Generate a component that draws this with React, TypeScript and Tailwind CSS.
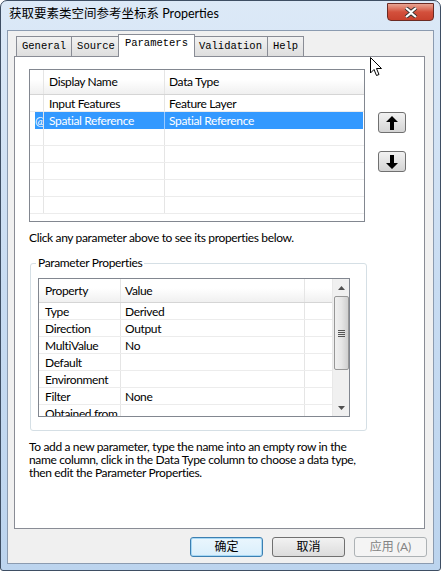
import React from 'react';

const ui = "font-['Lato','Noto_Sans_CJK_SC',sans-serif]";

const tabs = ['General', 'Source', 'Parameters', 'Validation', 'Help'];

const params = [
  { name: 'Input Features', type: 'Feature Layer', selected: false },
  { name: 'Spatial Reference', type: 'Spatial Reference', selected: true },
];

const props = [
  ['Type', 'Derived'],
  ['Direction', 'Output'],
  ['MultiValue', 'No'],
  ['Default', ''],
  ['Environment', ''],
  ['Filter', 'None'],
  ['Obtained from', ''],
];

const ArrowBtn = ({ down }: { down?: boolean }) => (
  <div className="w-[28px] h-[21px] rounded-[3px] border border-[#707070] bg-gradient-to-b from-[#f2f2f2] to-[#d4d4d4] flex items-center justify-center">
    <svg width="12" height="14" viewBox="0 0 12 14" className={down ? 'rotate-180' : ''}>
      <path d="M6 0 L12 6 L8 6 L8 14 L4 14 L4 6 L0 6 Z" fill="#000" />
    </svg>
  </div>
);

const DlgButton = ({ label, variant }: { label: string; variant: 'focus' | 'normal' | 'disabled' }) => {
  const base = 'w-[73px] h-[20px] rounded-[3px] flex items-center justify-center text-[12px]';
  const cls =
    variant === 'focus'
      ? 'border border-[#3c7fb1] bg-gradient-to-b from-[#eaf6fd] to-[#d9eefb] text-black shadow-[inset_0_0_0_1px_#a6d8f5]'
      : variant === 'normal'
      ? 'border border-[#707070] bg-gradient-to-b from-[#f2f2f2] to-[#dcdcdc] text-black'
      : 'border border-[#adb2b5] bg-[#f4f4f4] text-[#838383]';
  return <div className={`${base} ${cls}`}>{label}</div>;
};

export default function App() {
  return (
    <div className={`relative w-[441px] h-[571px] overflow-hidden rounded-t-[7px] rounded-b-[3px] border border-[#3e4e63] bg-gradient-to-b from-[#dce9f7] via-[#c8dcf2] to-[#bcd4ee] ${ui}`}>
      {/* title bar */}
      <div className="h-[29px] flex items-start justify-between pl-[8px] pr-[6px]">
        <div className="pt-[5px] text-[12.5px] leading-[16px] text-black">获取要素类空间参考坐标系 Properties</div>
        <div className="w-[47px] h-[18px] mt-[2px] rounded-b-[4px] border border-[#6b2a23] bg-gradient-to-b from-[#e8a493] via-[#d3503c] to-[#c8412d] flex items-center justify-center">
          <svg width="14" height="11" viewBox="0 0 14 11">
            <path d="M2 1 L7 5 L12 1 M2 10 L7 6 L12 10" stroke="#333" strokeWidth="4" fill="none" />
            <path d="M2 1 L7 5 L12 1 M2 10 L7 6 L12 10" stroke="#fff" strokeWidth="2.2" fill="none" />
          </svg>
        </div>
      </div>

      {/* client area */}
      <div className="mx-[6px] h-[534px] border border-[#8b9bb0] bg-[#f0f0f0] flex flex-col">
        {/* tabs */}
        <div className="flex items-end pl-[8px] pt-[3px] h-[25px]">
          {tabs.map((t) => {
            const sel = t === 'Parameters';
            return (
              <div
                key={t}
                className={`font-['Liberation_Mono',monospace] text-[10.5px] text-black border border-[#898c95] border-b-0 flex items-center ${
                  sel
                    ? 'h-[23px] -mx-[2px] px-[6px] bg-white z-10 -mb-px pb-[4px]'
                    : 'h-[20px] px-[5px] bg-gradient-to-b from-[#f2f2f2] to-[#dedede] -mr-px'
                }`}
              >
                {t}
              </div>
            );
          })}
        </div>

        {/* tab panel */}
        <div className="ml-[6px] w-[411px] h-[473px] border border-[#898c95] bg-white text-[12px] tracking-[-0.35px] text-black flex flex-col">
          {/* parameters list + arrows */}
          <div className="flex pl-[14px] pt-[12px]">
            <div className="w-[336px] h-[153px] border border-[#828790] overflow-hidden">
              <div className="flex h-[25px] border-b border-[#d5d5d5] bg-gradient-to-b from-white from-40% to-[#f0f0f0]">
                <div className="w-[14px] border-r border-[#e5e5e5]" />
                <div className="w-[121px] border-r border-[#e5e5e5] pl-[5px] flex items-center">Display Name</div>
                <div className="flex-1 pl-[4px] flex items-center">Data Type</div>
              </div>
              {params.map((p) => (
                <div key={p.name} className={`flex h-[17px] ${p.selected ? '' : 'border-b border-[#ececec]'}`}>
                  <div className="w-[14px] border-r border-[#e5e5e5] pl-[5px]">
                    {p.selected && (
                      <div className="h-full bg-[#3399ff] text-white leading-[17px] overflow-hidden">@</div>
                    )}
                  </div>
                  <div className={`w-[121px] border-r pl-[5px] leading-[17px] ${p.selected ? 'bg-[#3399ff] text-white border-[#9ccbff]' : 'border-[#e5e5e5]'}`}>
                    {p.name}
                  </div>
                  <div className={`flex-1 pl-[4px] leading-[17px] ${p.selected ? 'bg-[#3399ff] text-white mr-[1px]' : ''}`}>{p.type}</div>
                </div>
              ))}
              {[0, 1, 2, 3, 4].map((i) => (
                <div key={i} className="flex h-[17px] border-b border-[#ececec]">
                  <div className="w-[14px] border-r border-[#e5e5e5]" />
                  <div className="w-[121px] border-r border-[#e5e5e5]" />
                  <div className="flex-1" />
                </div>
              ))}
            </div>
            <div className="ml-[13px] pt-[43px] flex flex-col gap-[18px]">
              <ArrowBtn />
              <ArrowBtn down />
            </div>
          </div>

          <div className="pl-[14px] mt-[8px] leading-[16px]">Click any parameter above to see its properties below.</div>

          {/* group box */}
          <div className="relative ml-[15px] mt-[17px] w-[337px] h-[168px] border border-[#d5dfe5] rounded-[3px]">
            <div className="absolute -top-[9px] left-[5px] px-[2px] bg-white leading-[16px]">Parameter Properties</div>
            <div className="ml-[7px] mt-[14px] w-[312px] h-[139px] border border-[#828790] flex">
              <div className="flex-1 overflow-hidden">
                <div className="flex h-[24px] border-b border-[#d5d5d5] bg-gradient-to-b from-white from-40% to-[#f0f0f0]">
                  <div className="w-[82px] border-r border-[#e5e5e5] pl-[6px] flex items-center">Property</div>
                  <div className="w-[184px] border-r border-[#e5e5e5] pl-[4px] flex items-center">Value</div>
                  <div className="flex-1" />
                </div>
                {props.map(([k, v]) => (
                  <div key={k} className="flex h-[17px] border-b border-[#ececec]">
                    <div className="w-[82px] border-r border-[#e5e5e5] pl-[6px] leading-[17px] whitespace-nowrap">{k}</div>
                    <div className="w-[184px] border-r border-[#e5e5e5] pl-[4px] leading-[17px]">{v}</div>
                    <div className="flex-1" />
                  </div>
                ))}
              </div>
              {/* scrollbar */}
              <div className="w-[17px] bg-[#f0f0f0] border-l border-[#e8e8e8] flex flex-col items-center">
                <div className="h-[17px] flex items-center justify-center">
                  <svg width="7" height="4" viewBox="0 0 7 4"><path d="M3.5 0 L7 4 L0 4 Z" fill="#505050" /></svg>
                </div>
                <div className="w-[15px] h-[74px] rounded-[2px] border border-[#979797] bg-gradient-to-r from-[#f0f0f0] via-[#e6e6e6] to-[#cfcfcf] flex items-center justify-center">
                  <svg width="7" height="7" viewBox="0 0 7 7">
                    <path d="M0 0.5 H7 M0 2.5 H7 M0 4.5 H7 M0 6.5 H7" stroke="#555" strokeWidth="1" />
                  </svg>
                </div>
                <div className="flex-1" />
                <div className="h-[17px] flex items-center justify-center">
                  <svg width="7" height="4" viewBox="0 0 7 4"><path d="M0 0 L7 0 L3.5 4 Z" fill="#505050" /></svg>
                </div>
              </div>
            </div>
          </div>

          <div className="pl-[14px] mt-[9px] leading-[13px]">
            To add a new parameter, type the name into an empty row in the
            <br />
            name column, click in the Data Type column to choose a data type,
            <br />
            then edit the Parameter Properties.
          </div>
        </div>

        {/* dialog buttons */}
        <div className="flex justify-end gap-[9px] pr-[6px] mt-[8px]">
          <DlgButton label="确定" variant="focus" />
          <DlgButton label="取消" variant="normal" />
          <DlgButton label="应用 (A)" variant="disabled" />
        </div>
      </div>

      {/* mouse cursor */}
      <svg className="absolute left-[369px] top-[56px]" width="13" height="20" viewBox="0 0 13 20">
        <path d="M0.5 0.5 L0.5 16 L4 12.5 L6.5 18.5 L9 17.5 L6.5 11.5 L11.5 11.5 Z" fill="#fff" stroke="#000" strokeWidth="1" />
      </svg>
    </div>
  );
}
